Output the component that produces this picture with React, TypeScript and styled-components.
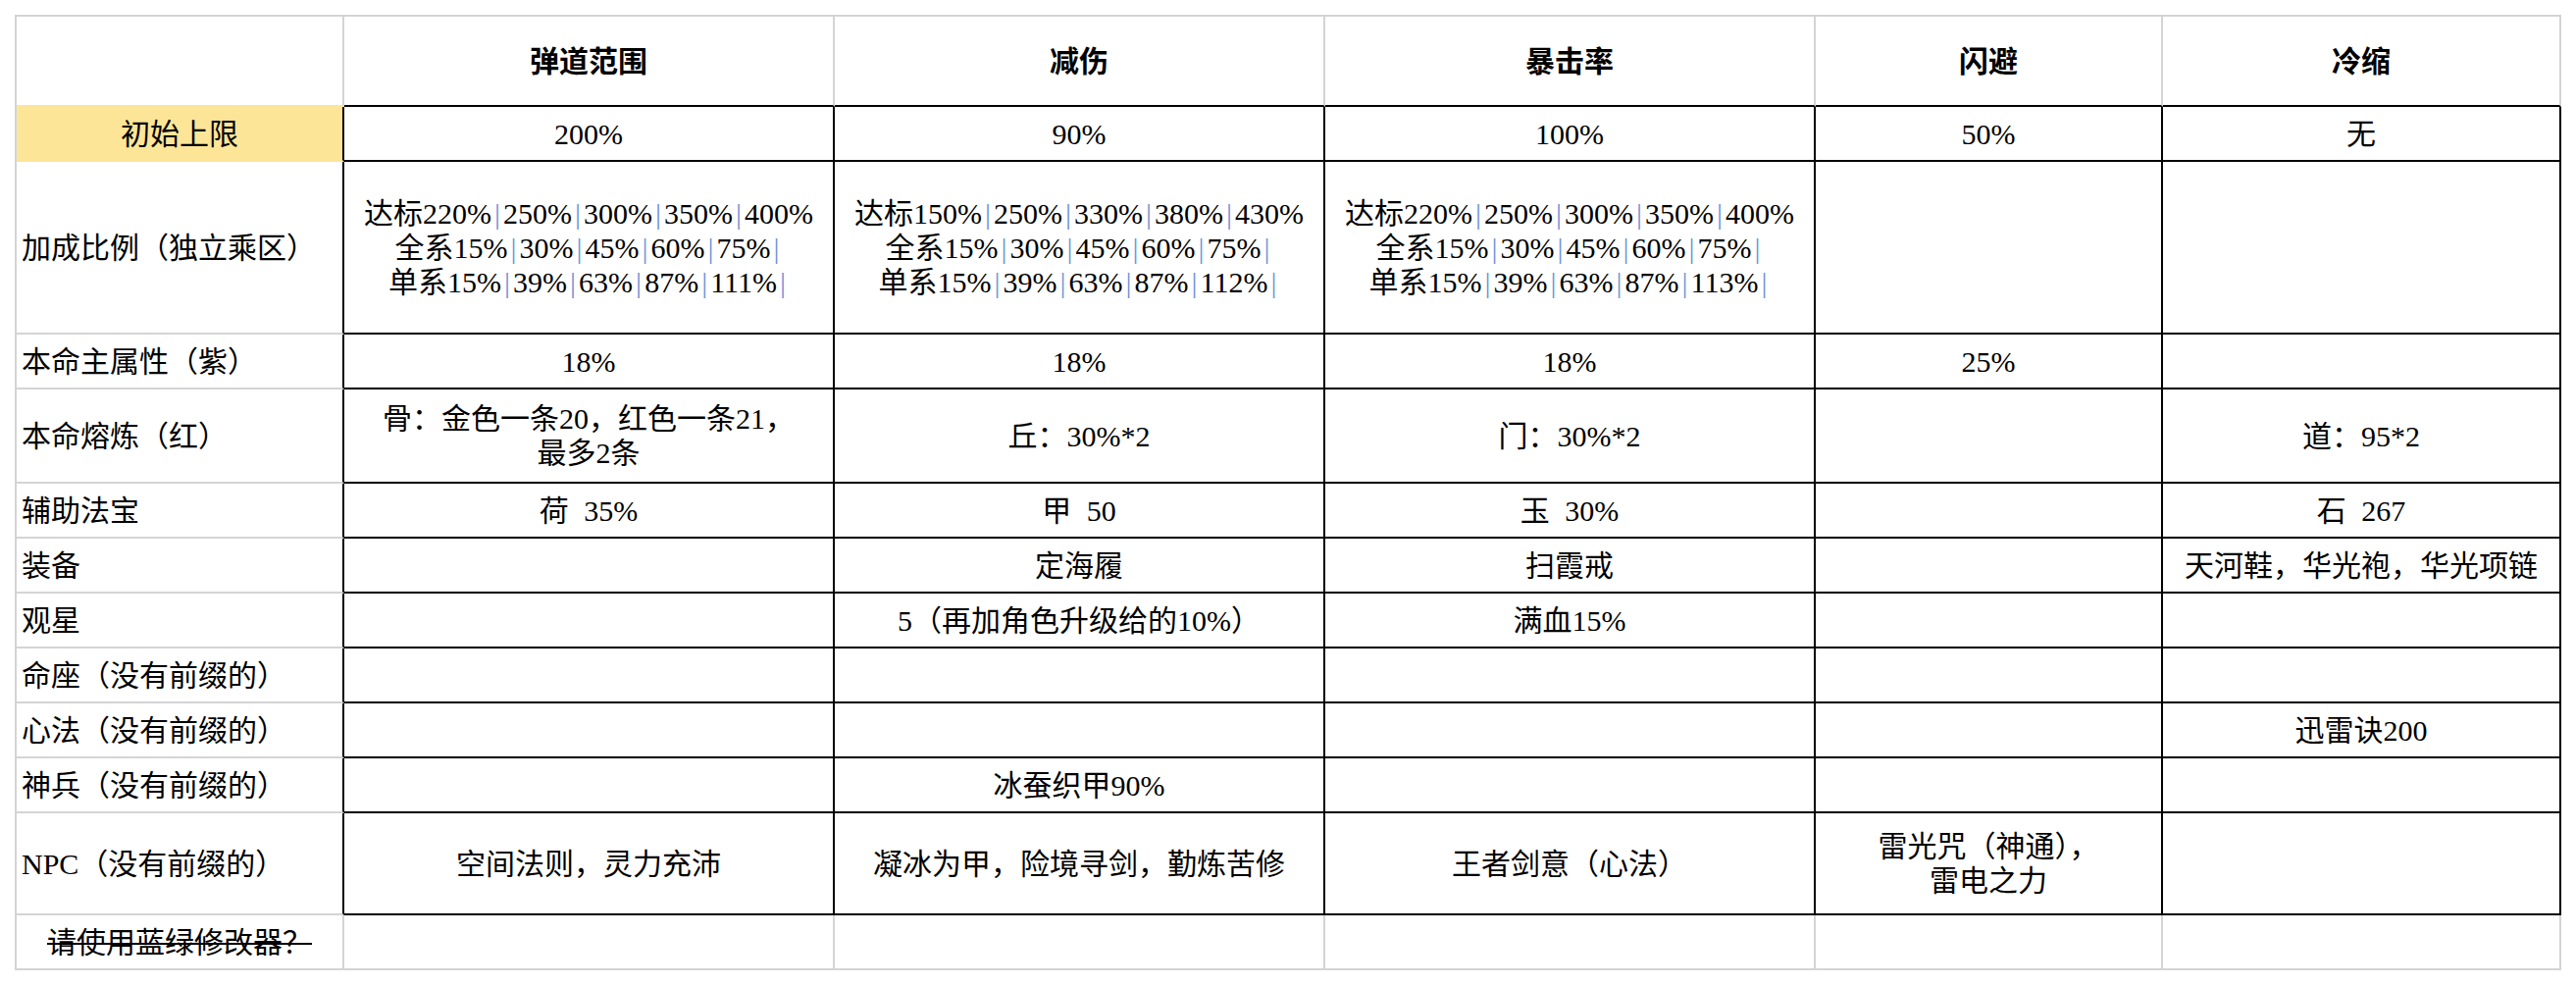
import React from 'react';
import styled, {createGlobalStyle} from 'styled-components';

const GRID = '#d4d4d4';
const INK = '#000';
const GOLD = '#fde598';

const GlobalStyle = createGlobalStyle`
  html, body {
    margin: 0;
    padding: 0;
    background: #fff;
  }

  body {
    font-family: 'Liberation Serif', 'Noto Sans CJK SC', serif;
    color: #000;
  }
`;

const Sheet = styled.div`
  display: grid;
  grid-template-columns: 334px 500px 500px 500px 354px 406px;
  grid-template-rows: 92px 56px 176px 56px 96px repeat(6, 56px) 104px 56px;
  width: max-content;
  margin: 15px 0 0 15px;
  border-top: 2px solid ${GRID};
  border-left: 2px solid ${GRID};
`;

interface CellProps {
  $right: string;
  $bottom: string;
  $left?: boolean;
  $fill?: string;
  $bold?: boolean;
}

const Cell = styled.div<CellProps>`
  box-sizing: border-box;
  display: flex;
  flex-direction: column;
  justify-content: center;
  align-items: ${props => (props.$left ? 'flex-start' : 'center')};
  padding: ${props => (props.$left ? '0 0 0 5px' : '0')};
  border-right: 2px solid ${props => props.$right};
  border-bottom: 2px solid ${props => props.$bottom};
  background: ${props => props.$fill || 'transparent'};
  font-size: 30px;
  line-height: 35px;
  font-weight: ${props => (props.$bold ? 700 : 400)};
  word-spacing: 8px;
  text-align: center;
  white-space: nowrap;
  overflow: hidden;
`;

const Line = styled.div`
  display: block;
`;

const Sep = styled.span`
  color: #6f95d8;
  margin: 0 3px;
`;

const Struck = styled.span`
  text-decoration: line-through;
  text-decoration-thickness: 2px;
`;

const headers = ['弹道范围', '减伤', '暴击率', '闪避', '冷缩'];

interface SheetRow {
  label: string;
  cells: string[];
  highlight?: boolean;
}

const rows: SheetRow[] = [
  {label: '初始上限', cells: ['200%', '90%', '100%', '50%', '无'], highlight: true},
  {
    label: '加成比例（独立乘区）',
    cells: [
      '达标220%|250%|300%|350%|400%\n全系15%|30%|45%|60%|75%|\n单系15%|39%|63%|87%|111%|',
      '达标150%|250%|330%|380%|430%\n全系15%|30%|45%|60%|75%|\n单系15%|39%|63%|87%|112%|',
      '达标220%|250%|300%|350%|400%\n全系15%|30%|45%|60%|75%|\n单系15%|39%|63%|87%|113%|',
      '',
      '',
    ],
  },
  {label: '本命主属性（紫）', cells: ['18%', '18%', '18%', '25%', '']},
  {label: '本命熔炼（红）', cells: ['骨：金色一条20，红色一条21，\n最多2条', '丘：30%*2', '门：30%*2', '', '道：95*2']},
  {label: '辅助法宝', cells: ['荷 35%', '甲 50', '玉 30%', '', '石 267']},
  {label: '装备', cells: ['', '定海履', '扫霞戒', '', '天河鞋，华光袍，华光项链']},
  {label: '观星', cells: ['', '5（再加角色升级给的10%）', '满血15%', '', '']},
  {label: '命座（没有前缀的）', cells: ['', '', '', '', '']},
  {label: '心法（没有前缀的）', cells: ['', '', '', '', '迅雷诀200']},
  {label: '神兵（没有前缀的）', cells: ['', '冰蚕织甲90%', '', '', '']},
  {
    label: 'NPC（没有前缀的）',
    cells: ['空间法则，灵力充沛', '凝冰为甲，险境寻剑，勤炼苦修', '王者剑意（心法）', '雷光咒（神通），\n雷电之力', ''],
  },
];

function renderText(text: string) {
  if (!text) return null;

  return text.split('\n').map((line, i) => (
    <Line key={i}>
      {line.split('|').map((part, j) =>
        j === 0 ? (
          part
        ) : (
          <React.Fragment key={j}>
            <Sep>|</Sep>
            {part}
          </React.Fragment>
        ),
      )}
    </Line>
  ));
}

function App() {
  function renderHeader() {
    return (
      <>
        <Cell $right={GRID} $bottom={GOLD} />
        {headers.map(title => (
          <Cell key={title} $right={GRID} $bottom={INK} $bold>
            {title}
          </Cell>
        ))}
      </>
    );
  }

  function renderRow(row: SheetRow) {
    return (
      <React.Fragment key={row.label}>
        {row.highlight ? (
          <Cell $right={INK} $bottom={GOLD} $fill={GOLD}>
            {row.label}
          </Cell>
        ) : (
          <Cell $right={INK} $bottom={GRID} $left>
            {row.label}
          </Cell>
        )}

        {row.cells.map((value, i) => (
          <Cell key={i} $right={INK} $bottom={INK}>
            {renderText(value)}
          </Cell>
        ))}
      </React.Fragment>
    );
  }

  function renderFooter() {
    return (
      <>
        <Cell $right={GRID} $bottom={GRID}>
          <Struck>请使用蓝绿修改器？</Struck>
        </Cell>
        {headers.map(title => (
          <Cell key={title} $right={GRID} $bottom={GRID} />
        ))}
      </>
    );
  }

  return (
    <>
      <GlobalStyle />
      <Sheet>
        {renderHeader()}
        {rows.map(row => renderRow(row))}
        {renderFooter()}
      </Sheet>
    </>
  );
}

export default App;
